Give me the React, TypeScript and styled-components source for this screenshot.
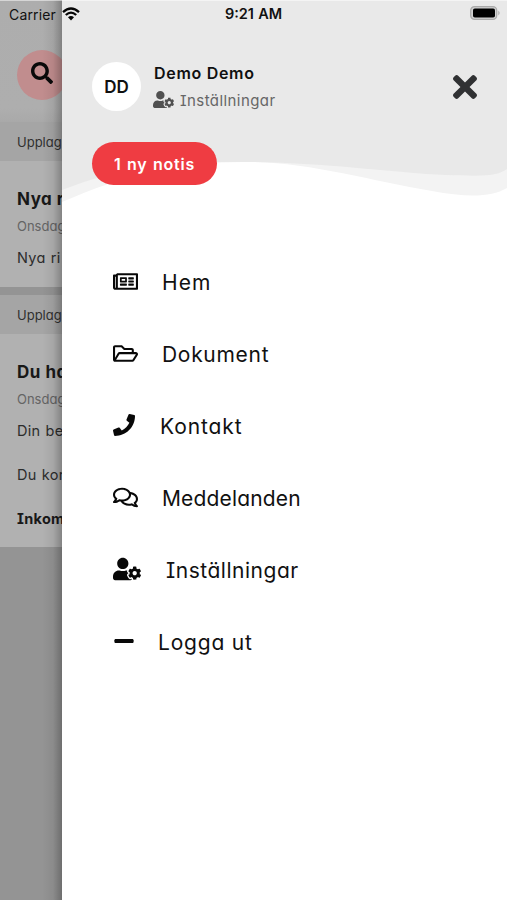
import React from "react";
import styled, { createGlobalStyle } from "styled-components";
import {
  FaMinus,
  FaPhone,
  FaRegComments,
  FaRegFolderOpen,
  FaRegNewspaper,
  FaSearch,
  FaTimes,
  FaUserCog,
} from "react-icons/fa";

const GlobalStyle = createGlobalStyle`
  * { box-sizing: border-box; }
  body {
    margin: 0;
    font-family: Inter, "Open Sans", sans-serif;
    font-feature-settings: "cv08" 1, "cv11" 1;
    color: #101010;
  }
  svg { display: block; flex: none; }
`;

const Screen = styled.div`
  position: relative;
  display: grid;
  grid-template-columns: 62px 445px;
  width: 507px;
  height: 900px;
  overflow: hidden;
  background: #fff;
`;

const StatusBar = styled.div`
  position: absolute;
  z-index: 3;
  top: 0;
  left: 0;
  right: 0;
  height: 27px;
  padding: 0 7px 0 9px;
  display: grid;
  grid-template-columns: 1fr 70px 1fr;
  align-items: center;
  color: #111;
  border-top: 1px solid rgba(255, 255, 255, 0.5);
`;

const Carrier = styled.div`
  display: flex;
  align-items: center;
  gap: 6px;
  font-size: 14px;
  letter-spacing: 0.15px;
  font-feature-settings: normal;
`;

const Clock = styled.div`
  font-size: 14.5px;
  font-weight: 600;
  letter-spacing: 0;
  word-spacing: 0.5px;
  white-space: nowrap;
  text-align: center;
  margin-left: -2px;
  padding-bottom: 1px;
  font-feature-settings: normal;
`;

const BatterySlot = styled.div`
  display: flex;
  justify-content: flex-end;
  margin-right: -1px;
  padding-bottom: 2px;
`;

const Feed = styled.div`
  position: relative;
  overflow: hidden;
  white-space: nowrap;
  background: #949494;
  &::after {
    content: "";
    position: absolute;
    inset: 0 0 0 auto;
    width: 20px;
    background: linear-gradient(to right, transparent, rgba(0, 0, 0, 0.06) 55%, rgba(0, 0, 0, 0.26));
  }
`;

const SearchBar = styled.div`
  height: 122px;
  padding: 50px 0 0 17px;
  background: linear-gradient(#adadad, #aeaeae 108px, #a9a9a9);
`;

const SearchButton = styled.div`
  width: 50px;
  height: 50px;
  border-radius: 50%;
  display: flex;
  align-items: center;
  justify-content: center;
  background: #c18d8e;
  padding: 0 1px 4px 0;
  color: #090909;
`;

const DateBand = styled.div`
  height: 39px;
  padding-left: 17px;
  line-height: 40px;
  font-size: 13px;
  letter-spacing: 0;
  color: #303030;
  background: #a5a5a5;
`;

const Post = styled.article<{ $height: number }>`
  height: ${(p) => p.$height}px;
  padding: 23px 0 0 17px;
  background: #b1b1b1;
`;

const PostTitle = styled.div`
  font-size: 17px;
  line-height: 30px;
  font-weight: 700;
  letter-spacing: 0.5px;
  color: #181818;
`;

const PostDate = styled.div`
  font-size: 13px;
  line-height: 25px;
  color: #646464;
`;

const PostText = styled.div<{ $bold?: boolean; $gap?: number }>`
  margin-top: ${(p) => p.$gap ?? 7}px;
  font-size: 14.5px;
  line-height: 24px;
  letter-spacing: 0.3px;
  word-spacing: 0.8px;
  font-weight: ${(p) => (p.$bold ? 700 : 400)};
  color: ${(p) => (p.$bold ? "#181818" : "#2c2c2c")};
`;

const Divider = styled.div`
  height: 8px;
  background: #949494;
`;

const Drawer = styled.aside`
  position: relative;
  background: #fff;
`;

const Header = styled.header`
  position: relative;
  height: 204px;
  padding: 62px 30px 0;
`;

const Wave = styled.svg`
  position: absolute;
  top: 0;
  left: 0;
`;

const Profile = styled.div`
  position: relative;
  display: flex;
  align-items: center;
  height: 49px;
`;

const Avatar = styled.div`
  width: 49px;
  height: 49px;
  border-radius: 50%;
  background: #fff;
  display: flex;
  align-items: center;
  justify-content: center;
  font-size: 17px;
  font-weight: 600;
`;

const Identity = styled.div`
  margin-left: 13px;
  flex: 1;
`;

const Name = styled.div`
  font-size: 16px;
  line-height: 24px;
  font-weight: 600;
  letter-spacing: 0.7px;
`;

const SettingsLink = styled.div`
  display: flex;
  align-items: center;
  gap: 6px;
  height: 28px;
  font-size: 15px;
  letter-spacing: 0.42px;
  padding-top: 3px;
  color: #666;
  svg { color: #505050; margin: 0 0 1px -1px; }
`;

const Notice = styled.button`
  position: relative;
  display: block;
  width: 125px;
  height: 43px;
  margin: 31px 0 0;
  padding: 0;
  border: 0;
  border-radius: 22px;
  background: #ef3c42;
  color: #fff;
  font: 600 16px Inter, sans-serif;
  letter-spacing: 0.8px;
  word-spacing: 0.6px;
`;

const Menu = styled.nav`
  display: flex;
  flex-direction: column;
  padding: 42px 0 0 51px;
`;

const MenuItem = styled.div<{ $gap: number; $spacing: number }>`
  display: flex;
  align-items: center;
  gap: ${(p) => p.$gap}px;
  height: 72px;
  font-size: 21px;
  letter-spacing: ${(p) => p.$spacing}px;
  color: #111;
  svg { color: #080808; margin-bottom: 2px; }
`;

const items = [
  { label: "Hem", Icon: FaRegNewspaper, size: 25, gap: 24, spacing: 1.1 },
  { label: "Dokument", Icon: FaRegFolderOpen, size: 25, gap: 24, spacing: 0.7 },
  { label: "Kontakt", Icon: FaPhone, size: 22, gap: 25, spacing: 0.9 },
  { label: "Meddelanden", Icon: FaRegComments, size: 25, gap: 24, spacing: 0.15 },
  { label: "Inställningar", Icon: FaUserCog, size: 28, gap: 25, spacing: 0.52 },
  { label: "Logga ut", Icon: FaMinus, size: 22, gap: 23, spacing: 0.8 },
];

export default function App() {
  return (
    <Screen>
      <GlobalStyle />
      <StatusBar>
        <Carrier>
          Carrier
          <svg width="18" height="14" viewBox="0 0 18 14" fill="none" stroke="#050505" strokeWidth="2.3">
            <path d="M1 5.1Q9-2.2 17 5.1M3.8 8Q9 3.2 14.2 8" />
            <path d="M6 10.3Q9 7.6 12 10.3L9 13.4Z" fill="#050505" stroke="none" />
          </svg>
        </Carrier>
        <Clock>9:21 AM</Clock>
        <BatterySlot>
          <svg width="32" height="16" viewBox="0 0 32 16">
            <rect x="1.7" y="1.7" width="26" height="12.6" rx="3.8" fill="#d1d1d1" stroke="#aaa" strokeWidth="1.3" />
            <rect x="4" y="3.5" width="22" height="9" rx="1.8" fill="#000" />
            <path d="M29.3 5.5Q32 8 29.3 10.5Z" fill="#aaa" />
          </svg>
        </BatterySlot>
      </StatusBar>

      <Feed>
        <SearchBar>
          <SearchButton>
            <FaSearch size={22} />
          </SearchButton>
        </SearchBar>
        <DateBand>Upplag</DateBand>
        <Post $height={126}>
          <PostTitle>Nya r</PostTitle>
          <PostDate>Onsdag</PostDate>
          <PostText>Nya ri</PostText>
        </Post>
        <Divider />
        <DateBand>Upplag</DateBand>
        <Post $height={213}>
          <PostTitle>Du ha</PostTitle>
          <PostDate>Onsdag</PostDate>
          <PostText>Din be</PostText>
          <PostText $gap={20}>Du kor</PostText>
          <PostText $gap={20} $bold>Inkom</PostText>
        </Post>
      </Feed>

      <Drawer>
        <Header>
          <Wave width="445" height="204" viewBox="0 0 445 204">
            <path d="M0 0H445V188C428 198 403 197 370 191C310 181 250 163 190 162C115 161 65 174 0 202Z" fill="#f3f3f3" />
            <path d="M0 0H445V169C434 177 419 176 384 175C335 173 265 163 190 162C115 161 60 166 0 190Z" fill="#e9e9e9" />
          </Wave>
          <Profile>
            <Avatar>DD</Avatar>
            <Identity>
              <Name>Demo Demo</Name>
              <SettingsLink>
                <FaUserCog size={21} />
                Inställningar
              </SettingsLink>
            </Identity>
            <svg width="24" height="24" viewBox="0 0 352 352" fill="#303133">
              <path
                transform="translate(0 -80)"
                d="M242.72 256l100.07-100.07c12.28-12.28 12.28-32.19 0-44.48l-22.24-22.24c-12.28-12.28-32.19-12.28-44.48 0L176 189.28 75.93 89.21c-12.28-12.28-32.19-12.28-44.48 0L9.21 111.45c-12.28 12.28-12.28 32.19 0 44.48L109.28 256 9.21 356.07c-12.28 12.28-12.28 32.19 0 44.48l22.24 22.24c12.28 12.28 32.2 12.28 44.48 0L176 322.72l100.07 100.07c12.28 12.28 32.2 12.28 44.48 0l22.24-22.24c12.28-12.28 12.28-32.19 0-44.48L242.72 256z"
              />
            </svg>
          </Profile>
          <Notice>1 ny notis</Notice>
        </Header>
        <Menu>
          {items.map(({ label, Icon, size, gap, spacing }) => (
            <MenuItem key={label} $gap={gap} $spacing={spacing}>
              <Icon size={size} />
              {label}
            </MenuItem>
          ))}
        </Menu>
      </Drawer>
    </Screen>
  );
}
